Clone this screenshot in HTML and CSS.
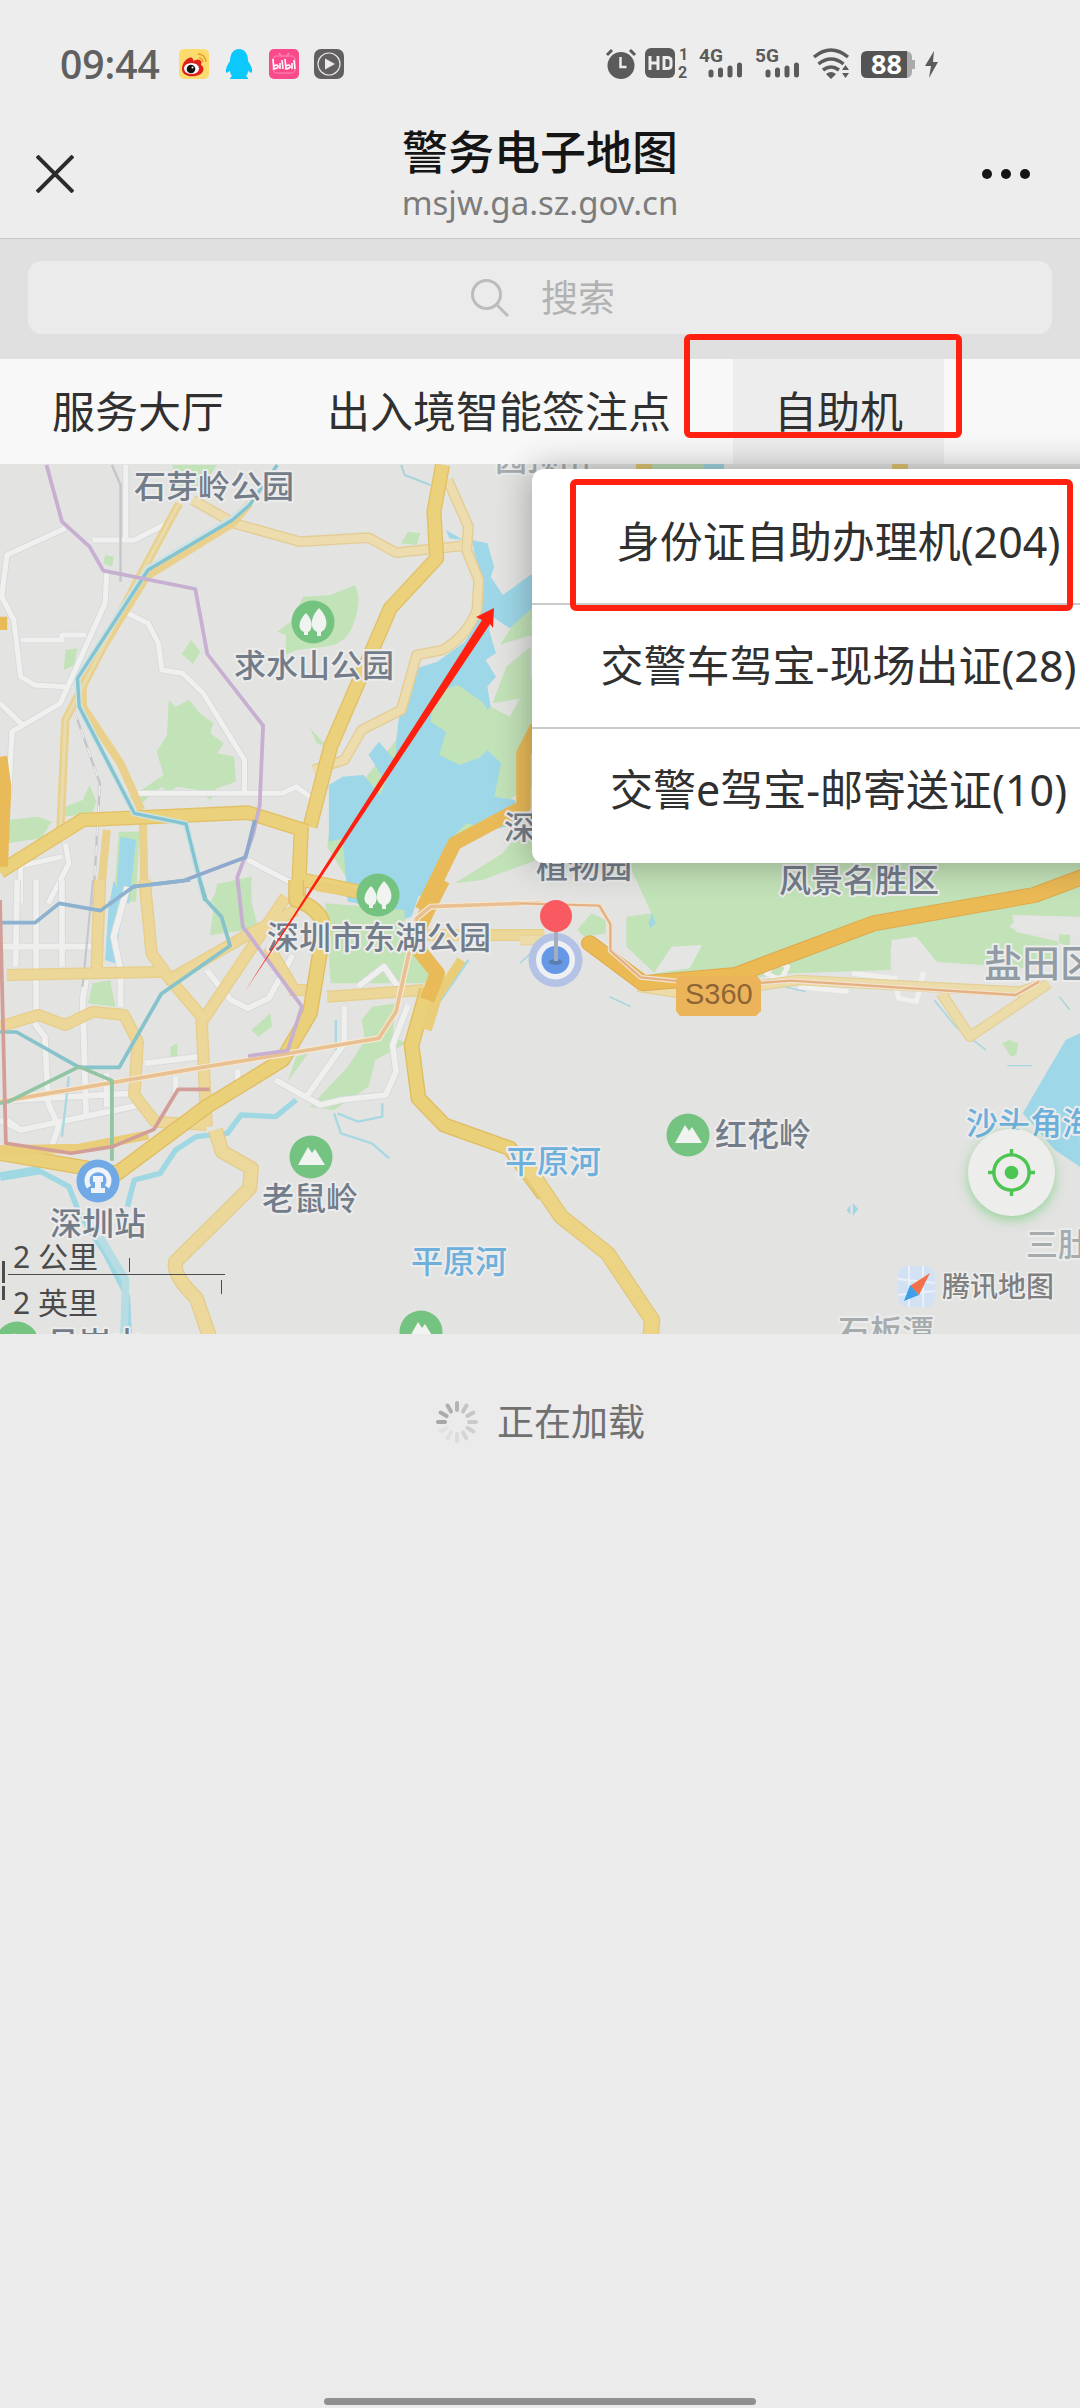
FILE: index.html
```
<!DOCTYPE html>
<html lang="zh-CN">
<head>
    <meta charset="UTF-8">
    <meta name="viewport" content="width=device-width, initial-scale=1.0">
    <title>警务电子地图</title>
    <link rel="stylesheet" href="styles.css">
</head>
<body>
    <div class="status-bar">
        <div class="status-left">
            <span class="clock">09:44</span>
            <svg class="app-icon" viewBox="0 0 30 30">
                <rect width="30" height="30" rx="5" fill="#fbdc6c"/>
                <path d="M3 20C3 13 10 7 13 9q2 1 1 3 6-3 8 0 1 1 0 4c4 2 3 8-2 10C13 29 3 27 3 20z" fill="#e0201b"/>
                <ellipse cx="12.500" cy="19.500" rx="7.500" ry="5.500" fill="#fff"/>
                <circle cx="12" cy="20" r="4.300" fill="#111"/>
                <circle cx="13.500" cy="18.500" r="1" fill="#fff"/>
                <path d="M19 5q7 0 8 8M20 9q3 0 4 4" fill="none" stroke="#ef9a28" stroke-width="1.500"/>
            </svg>
            <svg class="app-icon" viewBox="0 0 30 30">
                <path d="M15 0c6 0 9 5 9 12 2 3 5 8 4 11-1 2-3-1-4-1 0 2-1 4-2 5l2 2v1H6v-1l2-2c-1-1-2-3-2-5-1 0-3 3-4 1-1-3 2-8 4-11C6 5 9 0 15 0z" fill="#0cc8fc"/>
            </svg>
            <svg class="app-icon" viewBox="0 0 30 30">
                <rect width="30" height="30" rx="5" fill="#fb4a8c"/>
                <path d="M10 4l3 4M20 4l-3 4" stroke="#fd8ab5" stroke-width="1.500"/>
                <rect x="4" y="7" width="22" height="17" rx="4" fill="none" stroke="#fd76a8" stroke-width="1.500"/>
                <path d="M4 10l1 10q5-1 4-3t-4 0M11 14v6M13 11l1 9M16 10l1 10q5-1 4-3t-4 0M23 14v6M25 11l1 9" fill="none" stroke="#fff" stroke-width="1.600"/>
            </svg>
            <svg class="app-icon" viewBox="0 0 30 30">
                <rect width="30" height="30" rx="7" fill="#626060"/>
                <circle cx="15" cy="15" r="11" fill="none" stroke="#e6e6e6" stroke-width="1.200"/>
                <path d="M11 9.500l10 5.500-10 5.500z" fill="#ececec"/>
            </svg>
        </div>
        <svg class="status-right" viewBox="0 0 334 32" fill="#5b5b5b">
            <circle cx="15" cy="17.500" r="13.500"/>
            <path d="M1 7l5-5M29 7l-5-5" stroke="#5b5b5b" stroke-width="3"/>
            <path d="M14.500 9v10h6" fill="none" stroke="#ededed" stroke-width="2.500"/>
            <rect x="39" y="0" width="30" height="30" rx="6"/>
            <path d="M44 8v14M44 15h8M52 8v14M58 9.500h3q4 0 4 3v5q0 3-4 3h-3z" fill="none" stroke="#ededed" stroke-width="3"/>
            <text x="73" y="12" class="net small">1</text>
            <text x="72" y="30" class="net small">2</text>
            <text x="93" y="14" class="net">4G</text>
            <path d="M105 24v3M114.500 22v5M124 20v7M133.500 17v10" stroke="#5b5b5b" stroke-width="5" stroke-linecap="round"/>
            <text x="149" y="14" class="net">5G</text>
            <path d="M162 24v3M171.500 22v5M181 20v7M190.500 17v10" stroke="#5b5b5b" stroke-width="5" stroke-linecap="round"/>
            <path d="M208 9q17-14 34 0M212.500 16q12.500-10 25 0M217 22q8-6 16 0" fill="none" stroke="#5b5b5b" stroke-width="3.500"/>
            <path d="M220 26q5-4 10 0l-5 5zM236 22l3.500-5 3.500 5zM236 25h7l-3.500 5z"/>
            <path d="M299 3q7 0 7 6v3h3v9h-3v3q0 6-7 6z" fill="#aaa"/>
            <path d="M261 3h40v27h-40q-6 0-6-6V9q0-6 6-6z" fill="#545454"/>
            <text x="265" y="26" class="battery">88</text>
            <path d="M328 3l-9 15h6l-2 12 9-16h-5z"/>
        </svg>
    </div>

    <header class="title-bar">
        <button class="icon-button" aria-label="关闭">
            <svg viewBox="0 0 38 38"><path d="M1 1l36 36M37 1L1 37" stroke="#2b2b2b" stroke-width="4"/></svg>
        </button>
        <div class="title">
            <h1>警务电子地图</h1>
            <p>msjw.ga.sz.gov.cn</p>
        </div>
        <button class="icon-button more" aria-label="更多">
            <svg viewBox="0 0 48 10" fill="#151515"><circle cx="5" cy="5" r="5"/><circle cx="24" cy="5" r="5"/><circle cx="43" cy="5" r="5"/></svg>
        </button>
    </header>

    <div class="search-bar">
        <label class="search-box">
            <svg viewBox="0 0 38 38" fill="none" stroke="#bcbcbc" stroke-width="3"><circle cx="15.500" cy="15.500" r="14"/><path d="M25 25l12 12"/></svg>
            <input type="search" placeholder="搜索" aria-label="搜索">
        </label>
    </div>

    <nav class="tabs">
        <button class="tab">服务大厅</button>
        <button class="tab">出入境智能签注点</button>
        <div class="tab-group">
            <button class="tab active">自助机</button>
            <div class="mark mark-tab"></div>
            <ul class="dropdown">
                <li><button>身份证自助办理机(204)</button><div class="mark mark-item"></div></li>
                <li><button>交警车驾宝-现场出证(28)</button></li>
                <li><button>交警e驾宝-邮寄送证(10)</button></li>
            </ul>
        </div>
    </nav>

    <main class="map">
        <svg class="map-canvas" viewBox="0 464 1080 870" fill="none" stroke-linejoin="round">
            <rect y="464" width="1080" height="870" fill="#e3e3e2"/>

            <!-- north west -->
            <g transform="translate(0 460) scale(.3444 .3333)">
                <g fill="#c2e2b8">
                    <path d="M500 15h130l-40 60-70 20zM305 285l25 5-5 30-25-10zM1165 250l20-35 35 5-10 35zM880 410l80-5 70-30q25 40-5 120-20 60-85 65l-80 10-30 15v-60l-25-10 40-30zM555 540l27 35-22 37-32-30zM190 570l35-5-10 50-30 15zM490 720l20 20 40-20 30 40 40 30-10 30 40 30-20 30 50 10 5 75-55 20-20 35-35-30-60-10-30 20-15-20-60 50-35-15 100-70-20-70 30-50zM900 805l50 55-30-10zM190 1040l50-20 20-45 20 50-10 30-80 15zM20 1080l90-10 40 15-30 50-100 15zM345 1115h60l-10 210h-65zM640 1270l90-20v80H610z"/>
                    <path d="M1270 690l60-10 60 40 90 50 65-120V480l-90 70 55-90 50-30v540l-150 90-60 70-70 120-120 20-150-10-60-100 10-80z"/>
                    <path d="M1560 1050l-100 130-140 90 80-10 160-60z"/>
                </g>
                <g fill="#9ed7e8">
                    <path d="M1370 240l45 10 20 70-10 30 35 55 80-60h25v80l-85 80-50-35-10 40 20 70-30 20 30 50-25 30 10 60-20 20-90-60-30 40-10 50 40 60 60-10 10 60 30-30 40 40-20 100 60 10 20 70-90 20-70-20-50 50-20 90-20 60-50 20-20 60-55 20-60-50-70-15-15-190-40 10v-170l40-25 60-5 50 60 15-40-50-80 30-40 50 60v-60l20-170 40-50 60-20 80-60 30-50 20-100z"/>
                    <path d="M350 1130l45 10-20 190h-40zM1295 210l50 30-40-5z"/>
                </g>
                <g fill="#c2e2b8"><path d="M1260 700l70-25 70 50 20 30 50 30-80 40-5 70-50 20-60-30 20-70-45-30z"/><path d="M1540 460l-90 95 95-30zM1470 620l70-60v150l-110 20z"/></g>
                <g stroke="#d6d8da" stroke-width="20">
                    <path d="M365 15v220M270 240h120l95-50M190 205L20 285 5 410l35 70 20 170 40 25 90 5M310 340l-5 90-130 300-140 85-10 200M370 460l60 30 30 60 10 80 60 10 60 60 120 200v100M390 1000h430l40-20 40 30M60 540h120v-15h70M190 1150l10 60-60 120M50 1220l130-30M60 1330V1210M720 1200l130 70M0 730l70 70"/>
                </g>
                <g stroke="#f0f0ef" stroke-width="15">
                    <path d="M365 15v220M270 240h120l95-50M190 205L20 285 5 410l35 70 20 170 40 25 90 5M310 340l-5 90-130 300-140 85-10 200M370 460l60 30 30 60 10 80 60 10 60 60 120 200v100M390 1000h430l40-20 40 30M60 540h120v-15h70M190 1150l10 60-60 120M50 1220l130-30M60 1330V1210M720 1200l130 70M0 730l70 70"/>
                </g>
                <path d="M325 15l25 60v290M215 750l75 220-20 370" stroke="#c5c6ca" stroke-width="7"/>
                <path d="M215 750l75 220-20 370" stroke="#efefef" stroke-width="4" stroke-dasharray="30 30"/>
                <path d="M560 120l120 70 190 55 200-12 80 45 190-20M1300 60l60 140-5 70 35 90-5 90q-30 80-100 120l-75 15-45 165-115 60-50 90-90 30" stroke="#e3cd95" stroke-width="32"/>
                <path d="M560 120l120 70 190 55 200-12 80 45 190-20M1300 60l60 140-5 70 35 90-5 90q-30 80-100 120l-75 15-45 165-115 60-50 90-90 30" stroke="#ecdcae" stroke-width="24"/>
                <path d="M725 130l-50 60-250 160-185 310v80l110 170 60 140M520 130L400 360 190 780l-15 340L0 1230M310 1110l-20 220M415 1090l5 240" stroke="#e9d18d" stroke-width="24"/>
                <path d="M520 130L400 360 190 780l-15 340" stroke="#e8dcae" stroke-width="9"/>
                <path d="M1285 15l-25 140 8 140-135 150L960 860l-60 240" stroke="#e2c166" stroke-width="44"/>
                <path d="M1285 15l-25 140 8 140-135 150L960 860l-60 240" stroke="#ebd17c" stroke-width="36"/>
                <path d="M0 1235l240-155 480-22 170 55M875 1100l-10 240M880 1260l160 35" stroke="#e2c166" stroke-width="44"/>
                <path d="M0 1235l240-155 480-22 170 55M875 1100l-10 240M880 1260l160 35" stroke="#ebd17c" stroke-width="36"/>
                <path d="M0 470v40M0 890l12 90-10 240M1560 800l-40 80v160l-200 110-95 200" stroke="#e9ba58" stroke-width="42"/>
                <path d="M725 130l-50 45-245 150-205 330 5 85 160 320 150 32 55 230" stroke="#cfe3e5" stroke-width="18"/>
                <path d="M805 15l-80 120-50 45-245 150-205 325 5 85 160 320 150 32 55 230" stroke="#83c4d0" stroke-width="10"/>
                <path d="M135 15l45 170 80 75 40 72 267 55 35 195 162 215-10 240-20 90-45 125 5 70" stroke="#c7afd2" stroke-width="11"/>
                <path d="M740 1080l-27 112-180 70-145 18-70 50" stroke="#8ea9ce" stroke-width="11"/>
                <path d="M1165 15l10 30 75 30" stroke="#a8d4dc" stroke-width="6"/>
            </g>

            <!-- south west -->
            <g transform="translate(0 880) scale(.3444 .3333)">
                <g fill="#c2e2b8">
                    <path d="M630 10l90 15 30 120-140 20zM270 310l50-10 15 80-80-10zM785 400l5 40-40 30-20-20zM495 500l20-10v50h-20zM945 70l230 20v60l80 130-20 30H960zM1080 380l70-10-10 100 40 20-90 50-20 80-100 70-70-10 110-120 50-80-10-60zM860 530l35-10-60 85z"/>
                </g>
                <path d="M330 0l25 70-20 180-30-10 10-150z" fill="#9ed7e8"/>
                <g stroke="#d6d8da" stroke-width="22">
                    <path d="M50 0l-5 260M105 0v410M180 0v260M0 200h280M370 20l-40 150 20 100v110M250 300l-10 60 10 350M100 430l30 40 10 200 30 70-20 60M0 720l60 30 370-80M40 660l340-20M310 580v100M20 720l40 30M420 550l160-20M600 270l70 90 50 25 60-30 70-130M1000 380v110l-110 160M800 600l130 75 60-15 130-15 30-70-10-80 45-120M1040 320l75-60 40 60M510 590v50M690 570v60"/>
                </g>
                <g stroke="#efefee" stroke-width="17">
                    <path d="M50 0l-5 260M105 0v410M180 0v260M0 200h280M370 20l-40 150 20 100v110M250 300l-10 60 10 350M100 430l30 40 10 200 30 70-20 60M0 720l60 30 370-80M40 660l340-20M310 580v100M20 720l40 30M420 550l160-20M600 270l70 90 50 25 60-30 70-130M1000 380v110l-110 160M800 600l130 75 60-15 130-15 30-70-10-80 45-120M1040 320l75-60 40 60M510 590v50M690 570v60"/>
                </g>
                <path d="M270 0l-30 320" stroke="#c5c6ca" stroke-width="6"/>
                <path d="M0 890l115-20" stroke="#9fd7e2" stroke-width="26"/>
                <path d="M110 870l90 50 30 80 75 120 65 130 5 110M370 980l20-80 75-20 45-70 60-40 90-10 40-55 100 5 60-50" stroke="#9fd7e2" stroke-width="16"/>
                <path d="M970 700l20 60 90 30 50 45M200 590l-20 180M975 420v90M980 700l60 25 70-15v-40M1360 240l-80 120" stroke="#a8d9e2" stroke-width="7"/>
                <path d="M290 1070l75 130-5 160" stroke="#b6dde4" stroke-width="22"/>
                <g stroke="#e6ce8b" stroke-width="36">
                    <path d="M290 0l-10 280M420 0l20 220 55 80 90 110 15 330M20 285l470-10M0 440l110-35 80 30 80-40 90 10 40 80-10 160 60 80 150 10M830 50L590 420M490 300l220-130 150-80M780 200l80 140M950 350l280-20M840 330h80M1240 165h340"/>
                </g>
                <g stroke="#edd798" stroke-width="28">
                    <path d="M290 0l-10 280M420 0l20 220 55 80 90 110 15 330M20 285l470-10M0 440l110-35 80 30 80-40 90 10 40 80-10 160 60 80 150 10M830 50L590 420M490 300l220-130 150-80M780 200l80 140M950 350l280-20M840 330h80M1240 165h340"/>
                </g>
                <path d="M625 750l20 65 85 50-5 60-215 220q-10 40 60 110l40 120" stroke="#e3cc8f" stroke-width="44"/>
                <path d="M625 750l20 65 85 50-5 60-215 220q-10 40 60 110l40 120" stroke="#ecd89a" stroke-width="36"/>
                <path d="M860 0v60q80 30 80 90l-40 250-80 140-220 140-260 200-340-60M1240 330l-45 165 20 160 75 80 190 70 100 140" stroke="#e0bd60" stroke-width="46"/>
                <path d="M860 0v60q80 30 80 90l-40 250-80 140-220 140-260 200-340-60M1240 330l-45 165 20 160 75 80 190 70 100 140" stroke="#ebd07a" stroke-width="38"/>
                <path d="M0 810l230-5 200-40M920 20l130 20M1340 240l-70 110-30 100" stroke="#e9cd78" stroke-width="28"/>
                <path d="M1285 0q-60 120-85 190l70 90-30 80" stroke="#e9ba58" stroke-width="44"/>
                <g stroke-width="11">
                    <path d="M0 665l600-105 240-40 260-45 50-80 60-280 40-35 320-12" stroke="#f5e8d2" stroke-width="18"/>
                    <path d="M0 665l600-105 240-40 260-45 50-80 60-280 40-35 320-12" stroke="#e9c091"/>
                    <path d="M690 0l15 140 172 240-42 132-115 16" stroke="#c7afd2"/>
                    <path d="M0 128h102l70-58 120 22 95-72 165-20" stroke="#8db2cf"/>
                    <path d="M580 0l18 60 45 50 25 87-200 145-122 220H230L48 456H0" stroke="#86c3cb"/>
                    <path d="M0 670l25-5 205-105 95 42v240" stroke="#91c5a4"/>
                    <path d="M0 60l17 730 190 30 120-20 120-52 70-120h92" stroke="#d39e98"/>
                </g>
            </g>

            <!-- east -->
            <g transform="translate(520 880) scale(.3571 .3333)">
                <path d="M300-60h1268v170l-190-5 10 50 120 30-20 60-70 20-250-20-100-65-30 20v70l-280 10-300 40-70-30-90-90v-90l70-10z" fill="#c2e2b8"/>
                <path d="M160 150l40-50 40 20v40l-60 10zM1350 490l20-10 25 10-5 35-15 5zM1510 160l30-10v50l-30-10z" fill="#c2e2b8"/>
                <path d="M375 280l50-80 85-5-35 70zM1370 140l30-35 168 20v40l-160-5zM1040 180l70-10 60 80 260 30v40l-380-20z" fill="#e5e6e4"/>
                <path d="M1568 460l-40 20-120 220 90 110 70 50z" fill="#9ed7e8"/>
                <path d="M360 130l10-30 10 30-15 15zM915 990l10-15v30zM932 968l15 20-15 20z" fill="#9fd7e2"/>
                <path d="M1160 360l60 80 85 70M1365 557h68M250 350l60 30M0 250l60-60M740 320l60 15M1510 350l30 40" stroke="#a3d5dd" stroke-width="4"/>
                <path d="M690 280q30-40 60-20l-20 40zM930 280l120 15 10 60 50 10 20-90M780 320l140 15" stroke="#f0f0ef" stroke-width="14"/>
                <path d="M0 180h130M330 320l150 25M650 320l130-20 620 35 60-20M1180 340l80 130 220-160" stroke="#e4cf96" stroke-width="32"/>
                <path d="M0 180h130M330 320l150 25M650 320l130-20 620 35 60-20M1180 340l80 130 220-160" stroke="#ecdca9" stroke-width="25"/>
                <path d="M195 190l150 120 260-25 385-155 450-85 150-60" stroke="#dfa94a" stroke-width="48" stroke-linecap="round"/>
                <path d="M195 190l150 120 260-25 385-155 450-85 150-60" stroke="#ecba55" stroke-width="42" stroke-linecap="round"/>
                <path d="M0 70l222 7 31 55v80l85 80 230 25 190-15 630 43 65-40" stroke="#f1e4d1" stroke-width="14"/>
                <path d="M0 70l222 7 31 55v80l85 80 230 25 190-15 630 43 65-40" stroke="#e5b183" stroke-width="7"/>
                <path d="M20 860l95 150 130 110 125 200-5 60" stroke="#dfc779" stroke-width="46"/>
                <path d="M20 860l95 150 130 110 125 200-5 60" stroke="#ecd484" stroke-width="39"/>
            </g>

            <!-- slivers between the tab bar and the menu -->
            <path d="M636 466.500h16M892 466.500h16" stroke="#dfc373" stroke-width="5"/>
            <path d="M652 466.500h52" stroke="#b9d9b4" stroke-width="5"/>
            <path d="M704 466.500h20" stroke="#9fd3dc" stroke-width="5"/>

            <!-- poi icons -->
            <defs>
                <g id="park">
                    <circle r="21.500" fill="#75c381"/>
                    <path d="M-7-9c-6 6-9 14-4 18l2 1v3h4v-3l2-1c3-5 2-12-4-18zM6-14C0-8-4 2 1 8l3 2v4h4v-4l3-2c5-6 2-15-5-22z" fill="#f0f3ef"/>
                </g>
                <g id="hill">
                    <circle r="21.500" fill="#75c381"/>
                    <path d="M-13 8L-3-10l4 6 3-4 10 16z" fill="#f0f3ef"/>
                </g>
            </defs>
            <use href="#park" x="313" y="622"/>
            <use href="#park" x="378" y="895"/>
            <use href="#hill" x="311" y="1157"/>
            <use href="#hill" x="688" y="1135"/>
            <use href="#hill" x="421" y="1332"/>
            <use href="#hill" x="17" y="1343"/>
            <circle cx="98" cy="1181" r="21.500" fill="#70a9e6"/>
            <path d="M89 1187a11 11 0 1 1 18 0" stroke="#f0f3f7" stroke-width="5"/>
            <path d="M93 1176h10v6h-2v6h4v5H91v-5h4v-6h-2z" fill="#f0f3f7"/>

            <path d="M680 976h77l4 5v30l-5 5h-76l-4-5v-31z" fill="#ebb45a"/>
            <text x="685" y="1004" class="road-no">S360</text>

            <g class="place">
                <text x="134" y="498">石芽岭公园</text>
                <text x="234" y="677">求水山公园</text>
                <text x="504" y="839">深圳</text>
                <text x="536" y="878">植物园</text>
                <text x="779" y="892">风景名胜区</text>
                <text x="267" y="949">深圳市东湖公园</text>
                <text x="715" y="1146">红花岭</text>
                <text x="262" y="1210">老鼠岭</text>
                <text x="50" y="1235">深圳站</text>
                <text x="47" y="1355">吊岗山</text>
            </g>
            <g class="place water">
                <text x="505" y="1173">平原河</text>
                <text x="411" y="1273">平原河</text>
                <text x="966" y="1135">沙头角海</text>
            </g>
            <g class="place faint">
                <text x="495" y="471">园顶山</text>
                <text x="1026" y="1256">三肚</text>
                <text x="838" y="1343">石板潭</text>
            </g>
            <text x="984" y="977" class="place district">盐田区</text>

            <!-- current position -->
            <circle cx="555.500" cy="960" r="27" fill="#b4c3e5"/>
            <circle cx="555.500" cy="960" r="19.500" fill="#eef0f4"/>
            <circle cx="555.500" cy="960" r="14" fill="#6798e8"/>
            <ellipse cx="555.500" cy="962" rx="7" ry="3" fill="#5b7fb5"/>
            <path d="M556 930v31" stroke="#a4adba" stroke-width="4"/>
            <circle cx="556" cy="916" r="16" fill="#f95a61"/>

            <!-- scale -->
            <g stroke="#4d4d4d">
                <path d="M3.500 1261v22M3.500 1286v14" stroke-width="3"/>
                <path d="M8 1274.500h217M129.500 1258v14M221.500 1280v14"/>
            </g>
            <text x="13" y="1268" class="scale">2 公里</text>
            <text x="13" y="1314" class="scale">2 英里</text>

            <!-- map provider -->
            <rect x="898" y="1266" width="37" height="41" rx="9" fill="#d3e1f5"/>
            <path d="M898 1279l37 4M898 1295l37-4M909 1266v41M923 1266v41" stroke="#eaf0f8" stroke-width="2"/>
            <path d="M930 1273l-20 13 9 9z" fill="#f2714a"/>
            <path d="M904 1301l6-16 9 10z" fill="#409fe9"/>
            <text x="942" y="1297" class="provider">腾讯地图</text>

            <path d="M244.500 992L482 620l-6-3 18-9-1 20-3-4z" fill="#ff2010"/>
        </svg>
        <button class="locate" aria-label="定位">
            <svg viewBox="0 0 48 48" fill="none" stroke="#4cc552" stroke-width="3.500"><circle cx="24" cy="24" r="18"/><path d="M24 0v7M24 41v7M0 24h7M41 24h7"/><circle cx="24" cy="24" r="7" fill="#4cc552" stroke="none"/></svg>
        </button>
    </main>

    <div class="loading">
        <svg viewBox="-22 -22 44 44" stroke-width="4" stroke-linecap="round">
            <path d="M0-12v-7" stroke="#b4b4b4"/>
            <path d="M0-12v-7" stroke="#c4c4c4" transform="rotate(30)"/>
            <path d="M0-12v-7" stroke="#c6c6c6" transform="rotate(60)"/>
            <path d="M0-12v-7" stroke="#cacaca" transform="rotate(90)"/>
            <path d="M0-12v-7" stroke="#cfcfcf" transform="rotate(120)"/>
            <path d="M0-12v-7" stroke="#d5d5d5" transform="rotate(150)"/>
            <path d="M0-12v-7" stroke="#dbdbdb" transform="rotate(180)"/>
            <path d="M0-12v-7" stroke="#e0e0e0" transform="rotate(210)"/>
            <path d="M0-12v-7" stroke="#e2e2e2" transform="rotate(240)"/>
            <path d="M0-12v-7" stroke="#a6a6a6" transform="rotate(270)"/>
            <path d="M0-12v-7" stroke="#aaa" transform="rotate(300)"/>
            <path d="M0-12v-7" stroke="#afafaf" transform="rotate(330)"/>
        </svg>
        <span>正在加载</span>
    </div>

    <div class="home-bar"></div>
</body>
</html>
```
FILE: styles.css
```
* {
    box-sizing: border-box;
}
body {
    margin: 0;
    min-height: 100vh;
    display: flex;
    flex-direction: column;
    overflow-x: hidden;
    background-color: #ebebeb;
    color: #303030;
    font-family: "Noto Sans", "Noto Sans CJK SC", sans-serif;
}
button {
    margin: 0;
    padding: 0;
    border: none;
    background: none;
    color: inherit;
    font: inherit;
    cursor: pointer;
}
svg {
    display: block;
}

/* phone status bar */
.status-bar {
    display: flex;
    justify-content: space-between;
    align-items: center;
    height: 128px;
    padding: 0 140px 0 60px;
    background-color: #ededed;
}
.status-left {
    display: flex;
    align-items: center;
    gap: 15px;
}
.clock {
    margin-right: 4px;
    font-family: "Open Sans", "Noto Sans", sans-serif;
    font-size: 39px;
    font-weight: 600;
    line-height: 48px;
    color: #606060;
}
.app-icon {
    width: 30px;
    height: 30px;
}
.status-right {
    width: 334px;
    height: 32px;
    overflow: visible;
}
.net {
    font-family: Roboto, sans-serif;
    font-size: 19px;
    font-weight: 700;
}
.net.small {
    font-size: 16px;
}
.battery {
    font-size: 27px;
    font-weight: 700;
    fill: #fff;
}

/* web view title */
.title-bar {
    display: flex;
    justify-content: space-between;
    align-items: center;
    height: 111px;
    padding: 0 36px 18px;
    background-color: #ededed;
    border-bottom: 1px solid #c8c8c8;
}
.icon-button {
    width: 62px;
}
.icon-button svg {
    width: 38px;
}
.more svg {
    width: 48px;
}
.title {
    padding-top: 2px;
    text-align: center;
}
.title h1 {
    margin: 0;
    font-size: 46px;
    font-weight: 500;
    line-height: 56px;
    color: #151515;
}
.title p {
    margin: 0;
    font-size: 33px;
    line-height: 48px;
    color: #7c7c7c;
}

/* search */
.search-bar {
    padding: 22px 28px 25px;
    background-color: #e0e0e0;
}
.search-box {
    display: flex;
    justify-content: center;
    align-items: center;
    gap: 32px;
    height: 73px;
    padding-left: 12px;
    background-color: #ebebeb;
    border-radius: 14px;
}
.search-box svg {
    width: 38px;
    height: 38px;
}
.search-box input {
    width: 80px;
    padding: 0;
    border: none;
    outline: none;
    background: none;
    font: inherit;
    font-size: 37px;
    -webkit-appearance: none;
    appearance: none;
}
.search-box input::-webkit-search-cancel-button {
    display: none;
}
.search-box input::placeholder {
    color: #b2b2b2;
}

/* categories */
.tabs {
    display: flex;
    gap: 21px;
    height: 105px;
    padding-left: 11px;
    background-color: #f8f8f8;
}
.tab {
    height: 100%;
    padding: 0 41px 5px;
    font-size: 43px;
    white-space: nowrap;
}
.tab.active {
    background-color: #ededed;
}
.tab-group {
    position: relative;
}
.dropdown {
    position: absolute;
    z-index: 2;
    top: 110px;
    left: 50%;
    width: 614px;
    margin: 0 0 0 -307px;
    padding: 12px 0;
    list-style: none;
    background-color: #fff;
    border-radius: 12px;
    box-shadow: 0 0 36px rgba(0, 0, 0, 0.3);
}
.dropdown li {
    position: relative;
    border-bottom: 2px solid #c8cccc;
}
.dropdown li:last-child {
    border-bottom: none;
}
.dropdown button {
    width: 100%;
    height: 122px;
    padding-bottom: 6px;
    font-size: 43px;
}
.mark {
    position: absolute;
    z-index: 3;
    border: 6px solid #ff2010;
    border-radius: 6px;
    pointer-events: none;
}
.mark-tab {
    top: -25px;
    left: -49px;
    width: 278px;
    height: 104px;
}
.mark-item {
    top: -2px;
    left: 38px;
    width: 503px;
    height: 132px;
}

/* map */
.map {
    position: relative;
}
.map-canvas {
    width: 100%;
    height: auto;
}
.place {
    font-size: 32px;
    font-weight: 500;
    fill: #737d89;
    stroke: #ececec;
    stroke-width: 4px;
    paint-order: stroke;
}
.water {
    fill: #6db0db;
}
.faint {
    fill: #a6abab;
}
.district {
    font-size: 38px;
    fill: #929ca5;
}
.road-no {
    font-family: "Liberation Sans", Arial, sans-serif;
    font-size: 29px;
    fill: #8f6436;
}
.scale {
    font-size: 30px;
    fill: #4a4a4a;
}
.provider {
    font-size: 28px;
    font-weight: 500;
    fill: #808080;
    stroke: #efefef;
    stroke-width: 3px;
    paint-order: stroke;
}
.locate {
    position: absolute;
    right: 25px;
    bottom: 118px;
    display: grid;
    place-items: center;
    width: 87px;
    height: 87px;
    border-radius: 50%;
    background-color: #ededec;
    box-shadow: 0 4px 12px rgba(76, 197, 82, 0.5);
}
.locate svg {
    width: 47px;
}

.loading {
    display: flex;
    justify-content: center;
    align-items: center;
    gap: 18px;
    padding-top: 61px;
    font-size: 37px;
    line-height: 54px;
    color: #707070;
}
.loading svg {
    width: 44px;
    height: 44px;
}

.home-bar {
    width: 40%;
    height: 7px;
    margin: auto auto 3px;
    border-radius: 4px;
    background-color: #909090;
}
```
